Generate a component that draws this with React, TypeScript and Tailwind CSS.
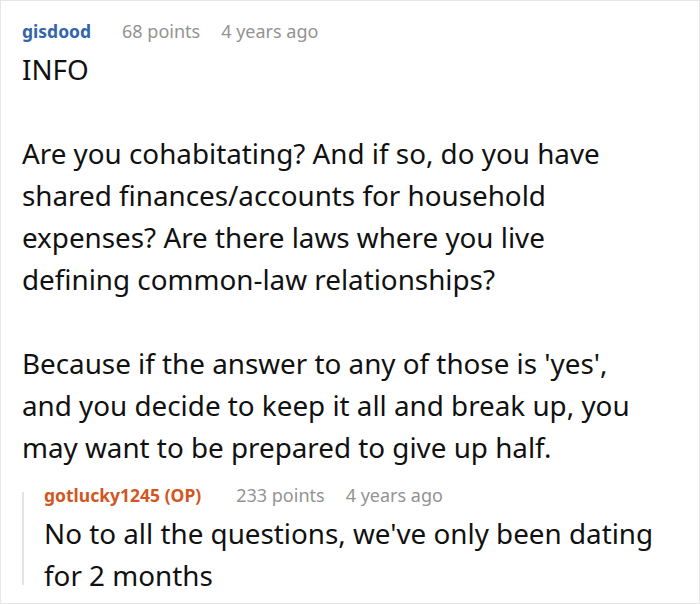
import React from "react";

export default function App() {
  return (
    <div className="w-[700px] h-[604px] bg-white border border-[#e6e6e6] overflow-hidden box-border" style={{ fontFamily: '"Noto Sans", "Open Sans", sans-serif' }}>
      <div className="pl-[21px] pr-[54px] pt-[17px]">
        <div className="flex items-baseline leading-[26px] h-[26px] whitespace-nowrap">
          <span className="text-[17.5px] font-bold text-[#3265ab]">gisdood</span>
          <span className="text-[18px] ml-[31px] text-[#939393]">68 points</span>
          <span className="text-[18px] ml-[21px] text-[#939393]">4 years ago</span>
        </div>
        <div className="text-[27.8px] leading-[42px] text-[#111] mt-[4px]">
          <p>INFO</p>
          <p>&nbsp;</p>
          <p>Are you cohabitating? And if so, do you have shared finances/accounts for household expenses? Are there laws where you live defining common-law relationships?</p>
          <p>&nbsp;</p>
          <p>Because if the answer to any of those is 'yes', and you decide to keep it all and break up, you may want to be prepared to give up half.</p>
        </div>
      </div>
      <div className="flex ml-[21px] mt-[14px]">
        <div className="w-[2px] bg-[#e4e4e4] mt-[10px] mb-[11px] shrink-0"></div>
        <div className="pl-[20px] pr-[30px]">
          <div className="flex items-baseline leading-[26px] h-[26px] whitespace-nowrap">
            <span className="text-[17.5px] font-bold text-[#d2561f]">gotlucky1245 (OP)</span>
            <span className="text-[18px] ml-[35px] text-[#939393]">233 points</span>
            <span className="text-[18px] ml-[21px] text-[#939393]">4 years ago</span>
          </div>
          <div className="mt-[4px] text-[27.8px] leading-[42px] text-[#111]">
            <p>No to all the questions, we've only been dating for 2 months</p>
          </div>
        </div>
      </div>
    </div>
  );
}
